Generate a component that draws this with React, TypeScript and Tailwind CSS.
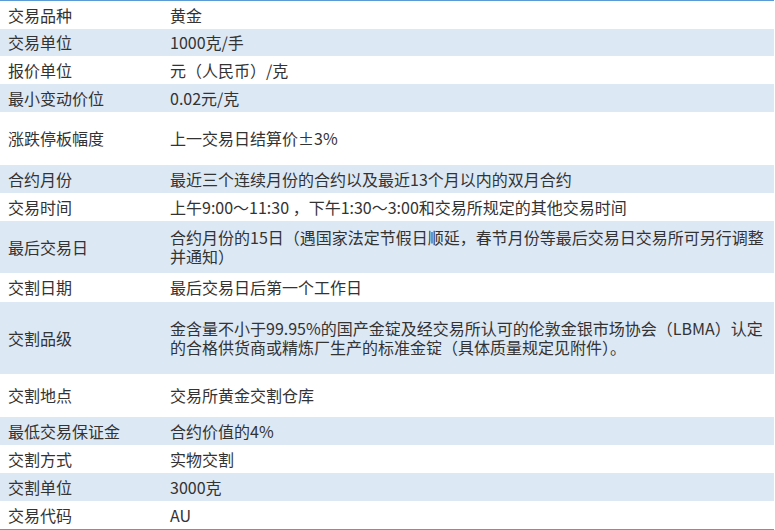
import React from 'react';

// 黄金期货合约规格表
const rows: { label: string; value: string; h: string }[] = [
  { label: '交易品种', value: '黄金', h: 'h-[28px]' },
  { label: '交易单位', value: '1000克/手', h: 'h-[27px]' },
  { label: '报价单位', value: '元（人民币）/克', h: 'h-[28px]' },
  { label: '最小变动价位', value: '0.02元/克', h: 'h-[28px]' },
  { label: '涨跌停板幅度', value: '上一交易日结算价±3%', h: 'h-[53px]' },
  { label: '合约月份', value: '最近三个连续月份的合约以及最近13个月以内的双月合约', h: 'h-[28px]' },
  { label: '交易时间', value: '上午9:00～11:30 ，下午1:30～3:00和交易所规定的其他交易时间', h: 'h-[28px]' },
  {
    label: '最后交易日',
    value: '合约月份的15日（遇国家法定节假日顺延，春节月份等最后交易日交易所可另行调整并通知）',
    h: 'h-[52px]',
  },
  { label: '交割日期', value: '最后交易日后第一个工作日', h: 'h-[29px]' },
  {
    label: '交割品级',
    value: '金含量不小于99.95%的国产金锭及经交易所认可的伦敦金银市场协会（LBMA）认定的合格供货商或精炼厂生产的标准金锭（具体质量规定见附件）。',
    h: 'h-[72px]',
  },
  { label: '交割地点', value: '交易所黄金交割仓库', h: 'h-[43px]' },
  { label: '最低交易保证金', value: '合约价值的4%', h: 'h-[28px]' },
  { label: '交割方式', value: '实物交割', h: 'h-[28px]' },
  { label: '交割单位', value: '3000克', h: 'h-[28px]' },
  { label: '交易代码', value: 'AU', h: 'h-[28px]' },
];

export default function App() {
  return (
    <div className="bg-white w-[775px] h-[530px] font-['Noto_Sans_CJK_SC',sans-serif] text-[#333333] text-[16px] leading-[19px]">
      <div className="w-[774px] border-t border-b border-[#5b9bd5]">
        {rows.map((r, i) => (
          <div key={r.label} className={`flex items-center ${r.h} ${i % 2 === 1 ? 'bg-[#dde8f5]' : 'bg-white'}`}>
            <div className="w-[162px] shrink-0 pl-2">{r.label}</div>
            <div className="flex-1 pl-2 pr-2">{r.value}</div>
          </div>
        ))}
      </div>
    </div>
  );
}
